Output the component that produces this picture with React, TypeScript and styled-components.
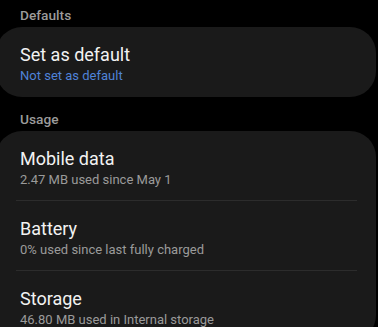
import styled, { createGlobalStyle } from 'styled-components'

const GlobalStyle = createGlobalStyle`
  html, body {
    margin: 0;
    padding: 0;
    background: #000;
    overflow: hidden;
  }
  body {
    font-family: Roboto, "Noto Sans", "Liberation Sans", sans-serif;
    -webkit-font-smoothing: antialiased;
  }
`

const Page = styled.div`
  width: 378px;
  height: 334px;
  margin-top: -7px;
  overflow: hidden;
`

const SectionTitle = styled.div`
  padding: 14px 20px 4px;
  font-size: 13.7px;
  line-height: 16px;
  font-weight: 500;
  color: #9b9b9b;
`

const Card = styled.div`
  margin: 0 2px 0 -4px;
  background: #1a1a1a;
  border-radius: 26px;
  overflow: hidden;
`

const Row = styled.div<{ divider?: boolean }>`
  position: relative;
  height: 70px;
  box-sizing: border-box;
  padding: 17px 20px 11px 24px;

  &::after {
    content: '';
    display: ${({ divider }) => (divider ? 'block' : 'none')};
    position: absolute;
    left: 20px;
    right: 19px;
    bottom: 0;
    height: 1px;
    background: #2c2c2c;
  }
`

const Title = styled.div`
  font-size: 18px;
  line-height: 22px;
  color: #f2f2f2;
`

const Summary = styled.div<{ accent?: boolean }>`
  font-size: 13px;
  line-height: 20px;
  color: ${({ accent }) => (accent ? '#4f82d8' : '#9a9a9a')};
`

interface ItemProps {
  title: string
  summary: string
  accent?: boolean
  divider?: boolean
}

const Item = ({ title, summary, accent, divider }: ItemProps) => (
  <Row divider={divider}>
    <Title>{title}</Title>
    <Summary accent={accent}>{summary}</Summary>
  </Row>
)

export default function App() {
  return (
    <Page>
      <GlobalStyle />
      <SectionTitle>Defaults</SectionTitle>
      <Card>
        <Item title="Set as default" summary="Not set as default" accent />
      </Card>

      <SectionTitle>Usage</SectionTitle>
      <Card>
        <Item title="Mobile data" summary="2.47 MB used since May 1" divider />
        <Item title="Battery" summary="0% used since last fully charged" divider />
        <Item title="Storage" summary="46.80 MB used in Internal storage" />
      </Card>
    </Page>
  )
}
